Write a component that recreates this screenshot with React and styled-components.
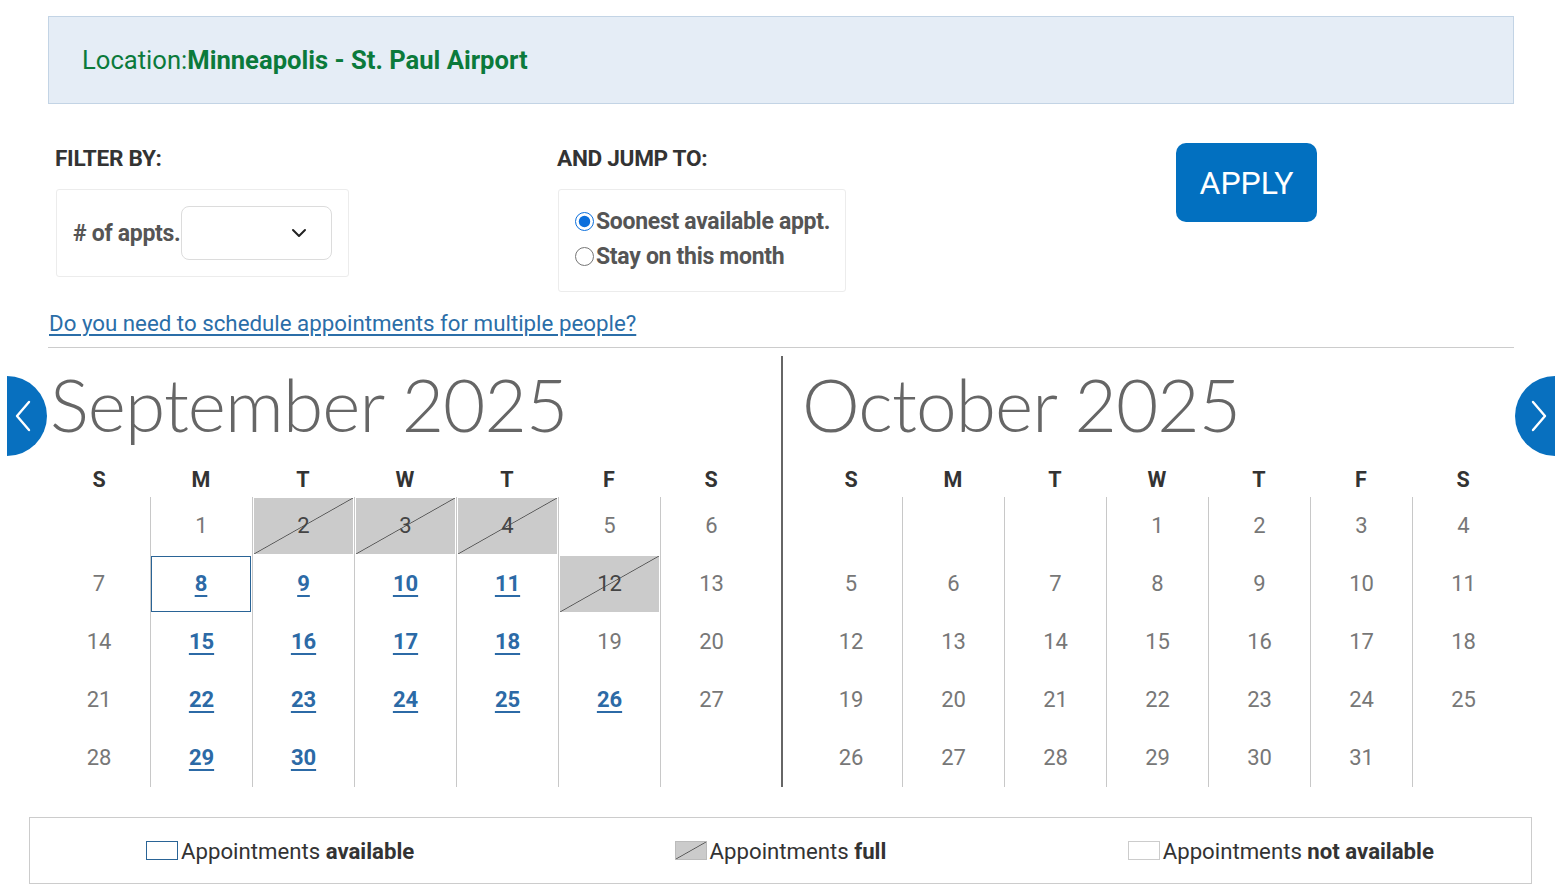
import React, { useState } from 'react';
import styled, { createGlobalStyle } from 'styled-components';

const GlobalStyle = createGlobalStyle`
  *, *::before, *::after {
    box-sizing: border-box;
  }

  body {
    margin: 0;
    background: #fff;
    font-family: Roboto, "Liberation Sans", Arial, sans-serif;
  }
`;

const months = [
  {
    name: 'September 2025',
    offset: 1,
    days: 30,
    full: [2, 3, 4, 12],
    open: [8, 9, 10, 11, 15, 16, 17, 18, 22, 23, 24, 25, 26, 29, 30],
  },
  { name: 'October 2025', offset: 3, days: 31, full: [], open: [] },
];

const weekdays = ['S', 'M', 'T', 'W', 'T', 'F', 'S'];

const hatch =
  'linear-gradient(to bottom right, #cbcbcb calc(50% - 0.8px), #555 50%, #cbcbcb calc(50% + 0.8px))';

const ChevronLeft = () => (
  <svg width='16' height='32' viewBox='0 0 16 32' fill='none'>
    <path d='M14 2 L2 16 L14 30' stroke='#fff' strokeWidth='2.4' strokeLinecap='round' strokeLinejoin='round' />
  </svg>
);

const ChevronRight = () => (
  <svg width='16' height='32' viewBox='0 0 16 32' fill='none'>
    <path d='M2 2 L14 16 L2 30' stroke='#fff' strokeWidth='2.4' strokeLinecap='round' strokeLinejoin='round' />
  </svg>
);

const SelectChevron = () => (
  <svg width='16' height='10' viewBox='0 0 16 10' fill='none'>
    <path d='M2 2 L8 8 L14 2' stroke='#222' strokeWidth='2' strokeLinecap='round' strokeLinejoin='round' />
  </svg>
);

const Month = ({ month, selected, first }) => {
  const cells = [];
  for (let i = 0; i < month.offset; i++) cells.push(null);
  for (let d = 1; d <= month.days; d++) cells.push(d);
  while (cells.length % 7 !== 0) cells.push(null);

  const stateOf = (d) => {
    if (month.full.includes(d)) return 'full';
    if (month.open.includes(d)) return d === selected ? 'selected' : 'open';
    return 'none';
  };

  return (
    <MonthBlock $first={first}>
      <MonthTitle>{month.name}</MonthTitle>
      <WeekRow>
        {weekdays.map((w, i) => (
          <WeekDay key={i}>{w}</WeekDay>
        ))}
      </WeekRow>
      <DayGrid>
        {cells.map((d, i) => {
          const state = d ? stateOf(d) : null;
          return (
            <DayCell key={i} $edge={i % 7 === 0}>
              {d && (
                <DayBox $state={state}>
                  {state === 'open' || state === 'selected' ? <DayLink href='#'>{d}</DayLink> : d}
                </DayBox>
              )}
            </DayCell>
          );
        })}
      </DayGrid>
    </MonthBlock>
  );
};

const App = () => {
  const [jump, setJump] = useState('soonest');

  return (
    <>
      <GlobalStyle />
      <Page>
        <LocationBar>
          Location:<strong>Minneapolis - St. Paul Airport</strong>
        </LocationBar>

        <Controls>
          <FilterGroup>
            <GroupTitle>FILTER BY:</GroupTitle>
            <FilterBox>
              <FieldLabel># of appts.</FieldLabel>
              <Select>
                <SelectChevron />
              </Select>
            </FilterBox>
          </FilterGroup>

          <JumpGroup>
            <GroupTitle>AND JUMP TO:</GroupTitle>
            <RadioBox>
              <RadioRow>
                <input
                  type='radio'
                  name='jump'
                  checked={jump === 'soonest'}
                  onChange={() => setJump('soonest')}
                />
                Soonest available appt.
              </RadioRow>
              <RadioRow>
                <input
                  type='radio'
                  name='jump'
                  checked={jump === 'stay'}
                  onChange={() => setJump('stay')}
                />
                Stay on this month
              </RadioRow>
            </RadioBox>
          </JumpGroup>

          <ApplyButton>APPLY</ApplyButton>
        </Controls>

        <MultiLink href='#'>Do you need to schedule appointments for multiple people?</MultiLink>
        <Rule />

        <Calendar>
          <NavButton $side='left' aria-label='Previous month'>
            <ChevronLeft />
          </NavButton>
          <Month month={months[0]} selected={8} first />
          <Month month={months[1]} />
          <NavButton $side='right' aria-label='Next month'>
            <ChevronRight />
          </NavButton>
        </Calendar>
      </Page>

      <Legend>
        <LegendItem>
          <Swatch $kind='available' />
          Appointments&nbsp;<b>available</b>
        </LegendItem>
        <LegendItem>
          <Swatch $kind='full' />
          Appointments&nbsp;<b>full</b>
        </LegendItem>
        <LegendItem>
          <Swatch $kind='none' />
          Appointments&nbsp;<b>not available</b>
        </LegendItem>
      </Legend>
    </>
  );
};

const Page = styled.div`
  padding: 16px 46px 0 48px;
`;

const LocationBar = styled.div`
  height: 88px;
  display: flex;
  align-items: center;
  padding-left: 33px;
  background: #e5edf6;
  border: 1px solid #c3d4e5;
  color: #0b7a3b;
  font-size: 25.6px;

  strong {
    font-weight: 700;
  }
`;

const Controls = styled.div`
  display: flex;
  align-items: flex-start;
  margin-top: 39px;
  padding-left: 7px;
`;

const FilterGroup = styled.div`
  width: 502px;
`;

const JumpGroup = styled.div`
  width: 619px;
`;

const GroupTitle = styled.div`
  margin-top: 4px;
  font-size: 22.6px;
  line-height: 24px;
  font-weight: 700;
  color: #333;
  letter-spacing: -0.3px;
`;

const FilterBox = styled.div`
  width: 293px;
  height: 88px;
  margin: 18px 0 0 1px;
  padding: 0 16px;
  display: flex;
  align-items: center;
  border: 1px solid #ececec;
  border-radius: 3px;
`;

const FieldLabel = styled.span`
  font-size: 23px;
  font-weight: 700;
  color: #555;
  letter-spacing: -0.3px;
  white-space: nowrap;
`;

const Select = styled.div`
  margin-left: 1px;
  width: 151px;
  height: 54px;
  padding: 0 24px 0 0;
  display: flex;
  align-items: center;
  justify-content: flex-end;
  border: 1px solid #dcdcdc;
  border-radius: 8px;
`;

const RadioBox = styled.div`
  width: 288px;
  height: 103px;
  margin: 18px 0 0 1px;
  padding: 14px 0 0 16px;
  border: 1px solid #ececec;
  border-radius: 3px;
`;

const RadioRow = styled.label`
  display: flex;
  align-items: center;
  height: 35px;
  font-size: 23px;
  font-weight: 700;
  color: #555;
  letter-spacing: -0.3px;
  white-space: nowrap;

  input {
    width: 19px;
    height: 19px;
    margin: 0 2px 0 0;
    accent-color: #0b6fdc;
  }
`;

const ApplyButton = styled.button`
  width: 141px;
  height: 79px;
  border: none;
  border-radius: 10px;
  background: #0270c0;
  color: #fff;
  font-family: Roboto, "Liberation Sans", Arial, sans-serif;
  font-size: 32px;
  cursor: pointer;
`;

const MultiLink = styled.a`
  display: block;
  width: fit-content;
  margin-top: 19px;
  margin-left: 1px;
  font-size: 22.3px;
  line-height: 24px;
  color: #2b6ea8;
  text-decoration: underline;
  text-underline-offset: 3px;
`;

const Rule = styled.hr`
  margin: 12px 0 0;
  border: none;
  border-top: 1px solid #ccc;
`;

const Calendar = styled.div`
  position: relative;
  display: flex;
  margin-top: 8px;
`;

const NavButton = styled.button`
  position: absolute;
  top: 20px;
  ${(p) => (p.$side === 'left' ? 'left: -41px;' : 'right: -41px;')}
  width: 40px;
  height: 80px;
  border: none;
  background: #0870bf;
  border-radius: ${(p) => (p.$side === 'left' ? '0 40px 40px 0' : '40px 0 0 40px')};
  display: flex;
  align-items: center;
  justify-content: ${(p) => (p.$side === 'left' ? 'flex-start' : 'flex-end')};
  padding: ${(p) => (p.$side === 'left' ? '0 0 0 8px' : '0 8px 0 0')};
  cursor: pointer;
`;

const MonthBlock = styled.div`
  padding-top: 11px;
  ${(p) =>
    p.$first
      ? 'width: 735px; padding-right: 19px; border-right: 2px solid #666;'
      : 'width: 731px; padding-left: 17px;'}
`;

const MonthTitle = styled.div`
  height: 75px;
  padding-left: 2px;
  font-family: Lato, "Open Sans", sans-serif;
  font-weight: 300;
  font-size: 73px;
  line-height: 75px;
  letter-spacing: -0.9px;
  color: #666;
  white-space: nowrap;
`;

const WeekRow = styled.div`
  display: grid;
  grid-template-columns: repeat(7, 102px);
  margin-top: 19px;
  height: 36px;
  align-items: center;
`;

const WeekDay = styled.div`
  text-align: center;
  font-size: 21.5px;
  font-weight: 700;
  color: #333;
`;

const DayGrid = styled.div`
  display: grid;
  grid-template-columns: repeat(7, 102px);
  grid-auto-rows: 58px;
`;

const DayCell = styled.div`
  display: flex;
  border-left: ${(p) => (p.$edge ? 'none' : '1px solid #c8c8c8')};
`;

const DayBox = styled.div`
  flex: 1;
  margin: 1px 1px 1px ${(p) => (p.$state === 'selected' ? '0' : '1px')};
  padding-bottom: 2px;
  display: flex;
  align-items: center;
  justify-content: center;
  font-size: 22px;
  color: ${(p) => (p.$state === 'full' ? '#444' : '#777')};
  border: ${(p) => (p.$state === 'selected' ? '1px solid #2a6496' : 'none')};
  background: ${(p) => (p.$state === 'full' ? hatch : 'transparent')};
`;

const DayLink = styled.a`
  color: #2c6aa6;
  font-weight: 700;
  text-decoration: underline;
  text-decoration-thickness: 2px;
  text-underline-offset: 4px;
`;

const Legend = styled.div`
  display: grid;
  grid-template-columns: repeat(3, 1fr);
  height: 67px;
  margin: 30px 28px 0 29px;
  border: 1px solid #ccc;
`;

const LegendItem = styled.div`
  display: flex;
  align-items: center;
  justify-content: center;
  font-size: 22.2px;
  color: #333;

  b {
    font-weight: 700;
  }
`;

const Swatch = styled.span`
  width: 32px;
  height: 19px;
  margin-right: 3px;
  border: 1px solid
    ${(p) => (p.$kind === 'available' ? '#2a6496' : p.$kind === 'full' ? '#bbb' : '#ccc')};
  background: ${(p) => (p.$kind === 'full' ? hatch : '#fff')};
`;

export default App;
